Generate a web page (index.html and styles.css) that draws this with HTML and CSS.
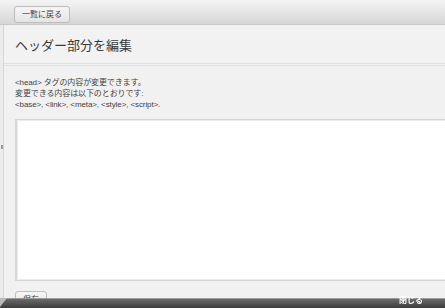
FILE: index.html
```html
<!DOCTYPE html>
<html lang="ja">
<head>
<meta charset="utf-8">
<link rel="stylesheet" href="styles.css">
</head>
<body>
<div class="topbar">
  <button class="btn">一覧に戻る</button>
</div>
<div class="main">
  <div class="side"><span class="grip"></span></div>
  <div class="content">
    <div class="header"><h1 class="title">ヘッダー部分を編集</h1></div>
    <div class="body">
      <p class="desc">&lt;head&gt; タグの内容が変更できます。<br>変更できる内容は以下のとおりです:<br>&lt;base&gt;, &lt;link&gt;, &lt;meta&gt;, &lt;style&gt;, &lt;script&gt;.</p>
      <textarea class="editor"></textarea>
      <button class="btn save">保存</button>
    </div>
  </div>
</div>
<div class="bottombar">
  <span class="corner"></span>
  <span class="close">閉じる</span>
</div>
</body>
</html>
```
FILE: styles.css
```css
html, body {
  margin: 0;
  padding: 0;
  height: 100%;
  overflow: hidden;
}
body {
  background: #f1f1f1;
  font-family: "Liberation Sans", "Noto Sans CJK JP", sans-serif;
  color: #333;
}
.topbar {
  height: 25px;
  box-sizing: border-box;
  background: linear-gradient(#f4f4f4, #d6d6d6);
  border-bottom: 1px solid #c8c8c8;
  padding: 3px 0 0 14px;
}
.btn {
  font-family: "Liberation Sans", "Noto Sans CJK JP", sans-serif;
  font-size: 8px;
  color: #444;
  height: 17px;
  padding: 0 7px;
  border: 1px solid #bdbdbd;
  border-radius: 3px;
  background: linear-gradient(#f6f6f6, #e4e4e4);
  line-height: 15px;
}
.main {
  display: flex;
  height: 283px;
}
.side {
  width: 3px;
  flex: none;
  background: #ececec;
  border-right: 1px solid #d6d6d6;
  position: relative;
}
.grip {
  position: absolute;
  left: 1px;
  top: 120px;
  width: 2px;
  height: 4px;
  background: #999;
}
.content {
  flex: 1;
  min-width: 0;
}
.header {
  height: 41px;
  box-sizing: border-box;
  border-bottom: 3px double #e0e0e0;
  background: #f2f2f2;
  padding: 12px 0 0 11px;
}
.title {
  margin: 0;
  font-size: 13px;
  font-weight: normal;
  color: #3a3a3a;
  line-height: 18px;
}
.body {
  padding: 11px 0 0 11px;
}
.desc {
  margin: 0;
  font-size: 8px;
  line-height: 11px;
  color: #444;
  letter-spacing: -0.1px;
}
.editor {
  display: block;
  margin-top: 9px;
  width: 460px;
  height: 162px;
  box-sizing: border-box;
  border: 1px solid #d6d6d6;
  border-left-width: 2px;
  box-shadow: inset 0 0 0 1px #ececec;
  background: #fff;
  resize: none;
}
.save {
  margin-top: 10px;
  padding: 0 7px;
}
.bottombar {
  position: fixed;
  left: 0;
  right: 0;
  bottom: 0;
  height: 9px;
  background: linear-gradient(#6b6b6b, #3c3c3c);
  border-top: 1px solid #9a9a9a;
}
.corner {
  position: absolute;
  left: 0;
  top: -1px;
  width: 0;
  height: 0;
  border-left: 7px solid #bbb;
  border-bottom: 9px solid transparent;
}
.close {
  position: absolute;
  left: 399px;
  top: -3px;
  font-size: 8px;
  color: #fff;
  font-weight: bold;
  line-height: 10px;
}
```
